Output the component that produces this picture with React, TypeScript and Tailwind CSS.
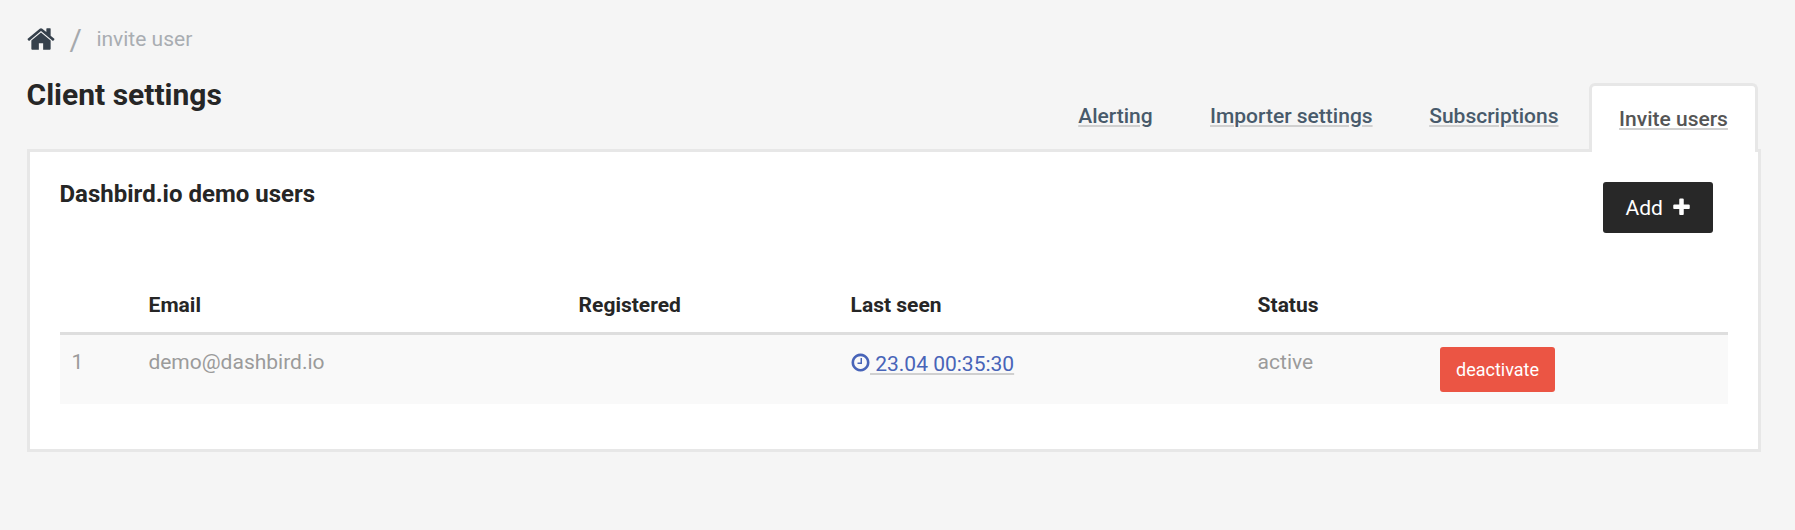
import type { ReactNode } from 'react';

const HOME =
  'M1472 992v480q0 26-19 45t-45 19h-384v-384h-256v384h-384q-26 0-45-19t-19-45v-480q0-1 .5-3t.5-3l575-474 575 474q1 2 1 6zm223-69l-62 74q-8 9-21 11h-3q-13 0-21-7l-692-577-692 577q-12 8-24 7-13-2-21-11l-62-74q-8-10-7-23.5t11-21.5l719-599q32-26 76-26t76 26l244 204v-195q0-14 9-23t23-9h192q14 0 23 9t9 23v408l219 182q10 8 11 21.5t-7 23.5z';
const CLOCK =
  'M1024 544v448q0 14-9 23t-23 9h-320q-14 0-23-9t-9-23v-64q0-14 9-23t23-9h224v-352q0-14 9-23t23-9h64q14 0 23 9t9 23zm416 352q0-148-73-273t-198-198-273-73-273 73-198 198-73 273 73 273 198 198 273 73 273-73 198-198 73-273zm224 0q0 209-103 385.5t-279.5 279.5-385.5 103-385.5-103-279.5-279.5-103-385.5 103-385.5 279.5-279.5 385.5-103 385.5 103 279.5 279.5 103 385.5z';
const PLUS =
  'M1600 736v192q0 40-28 68t-68 28h-416v416q0 40-28 68t-68 28h-192q-40 0-68-28t-28-68v-416h-416q-40 0-68-28t-28-68v-192q0-40 28-68t68-28h416v-416q0-40 28-68t68-28h192q40 0 68 28t28 68v416h416q40 0 68 28t28 68z';

function Icon({ path, className }: { path: string; className: string }) {
  return (
    <svg viewBox="0 0 1792 1792" fill="currentColor" className={className} aria-hidden="true">
      <path d={path} />
    </svg>
  );
}

function TabLink({ children }: { children: ReactNode }) {
  return (
    <a
      href="#"
      className="font-medium underline decoration-[#d0d0d0] decoration-2 underline-offset-2"
    >
      {children}
    </a>
  );
}

const columns = 'grid grid-cols-[76.6px_430px_272px_407px_182.4px_300px]';

export default function App() {
  return (
    <div className="h-[530px] overflow-hidden bg-[#f5f5f5] pr-[34px] pl-[27px] font-['Roboto',sans-serif] text-[21px] leading-[30px] text-[#262626]">
      <nav className="flex h-[78px] items-start pt-6">
        <Icon path={HOME} className="-ml-[1.5px] size-[30px] shrink-0 text-[#36414c]" />
        <span className="mt-px ml-[14px] text-[30px] text-[#a5a9ad]">/</span>
        <span className="ml-[14.5px] text-[#a9adb2]">invite user</span>
      </nav>

      <header className="flex h-[71px] justify-between">
        <h1 className="-ml-[0.5px] text-[30px] leading-[34px] font-bold">Client settings</h1>
        <div className="flex items-start text-[#485a6b]">
          <div className="mt-[23px] mr-[57.4px]">
            <TabLink>Alerting</TabLink>
          </div>
          <div className="mt-[23px] mr-[56.6px]">
            <TabLink>Importer settings</TabLink>
          </div>
          <div className="mt-[23px] mr-[30.5px]">
            <TabLink>Subscriptions</TabLink>
          </div>
          <div className="relative z-10 mt-[5px] mr-[3px] h-[69px] w-[169px] rounded-t-md border-3 border-b-0 border-[#e7e7e7] bg-white pt-[18px] text-center text-[#555555]">
            <TabLink>Invite users</TabLink>
          </div>
        </div>
      </header>

      <main className="h-[303px] border-3 border-[#e7e7e7] bg-white px-[30px] pt-[30px]">
        <div className="flex h-[105px] items-start justify-between">
          <h2 className="-mt-[3px] -ml-[0.5px] text-2xl leading-[30px] font-bold">
            Dashbird.io demo users
          </h2>
          <button className="mr-[15px] flex h-[51px] w-[110px] items-center rounded-[3px] bg-[#282828] pl-[22.5px] text-white">
            Add
            <Icon path={PLUS} className="ml-[8.3px] size-[21px]" />
          </button>
        </div>

        <div>
          <div className={`${columns} h-[48px] border-b-3 border-[#dedede] pt-[3px] font-bold`}>
            <span />
            <span className="pl-3">Email</span>
            <span className="pl-3">Registered</span>
            <span className="pl-3">Last seen</span>
            <span className="pl-3">Status</span>
            <span />
          </div>
          <div className={`${columns} h-[69px] bg-[#f9f9f9] pt-3 text-[#9b9b9b]`}>
            <span className="pl-[11.5px]">1</span>
            <span className="pl-[11.8px]">demo@dashbird.io</span>
            <span />
            <a href="#" className="flex items-start pt-0.5 pl-[11.4px] text-[#4864b8]">
              <Icon path={CLOCK} className="mt-[3px] size-[21px]" />
              <span className="-ml-px whitespace-pre underline decoration-[#d0d0d0] decoration-2 underline-offset-2">
                {' 23.04 00:35:30'}
              </span>
            </a>
            <span className="pl-3">active</span>
            <button className="ml-3 h-[45px] w-[115px] rounded-[3px] bg-[#eb5544] text-lg text-white">
              deactivate
            </button>
          </div>
        </div>
      </main>
    </div>
  );
}
